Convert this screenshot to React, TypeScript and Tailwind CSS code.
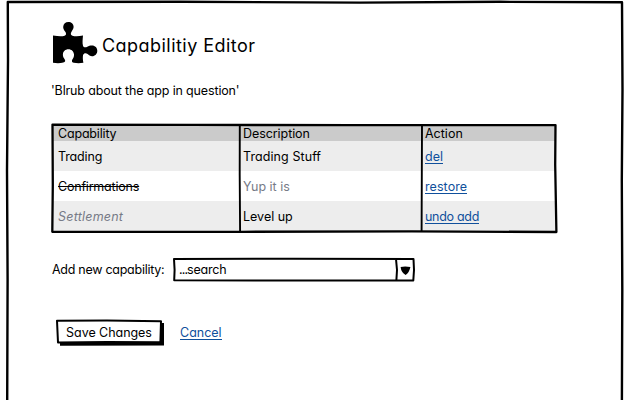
import type { ReactNode } from "react";

function Sketch({ d, w, h, sw = 2.3 }: { d: string; w: number; h: number; sw?: number }) {
  return (
    <svg className="pointer-events-none absolute left-0 top-0 overflow-visible" width={w} height={h} viewBox={`0 0 ${w} ${h}`} fill="none" stroke="#000" strokeWidth={sw} strokeLinejoin="round" aria-hidden="true">
      <path d={d} />
    </svg>
  );
}

function Puzzle() {
  return (
    <svg className="block shrink-0" width="46" height="43" viewBox="0 0 46 43" fill="#000" aria-hidden="true">
      <path d="M1 14.5C6 15.4 10 15.6 12.6 14.8C14.6 14 14.4 12 12.9 10.2C11.8 8.8 11.1 7.4 11.2 5.7C11.4 2.8 13.5 1 16.4 1C19.3 1 21.5 2.9 21.6 5.8C21.6 7.5 20.8 8.8 19.8 10.2C18.4 12.1 18.4 14 20.4 14.7C23.2 15.5 27 15.3 31 14.5C30.7 18 30.2 22 31 24.7C31.6 26.6 33.5 26.7 35.3 25.8C36.7 25 38 24.5 40 24.5C43.1 24.5 45.3 26.8 45.3 29.7C45.3 32.8 43 35.2 40.1 35.2C38.1 35.2 36.8 34.1 35.6 33C34 31.6 31.8 31.9 31.1 34C30.6 36 30.8 39 31.4 41.8C28 42.3 24.5 42.3 21.8 41.7C19.4 41.1 19.6 39.4 20.7 37.9C21.6 36.7 22.1 35.4 22 33.6C21.8 30.3 19.6 28.2 16.4 28.2C13.2 28.2 11.1 30.3 10.9 33.5C10.8 35.3 11.5 36.6 12.5 37.9C13.7 39.6 13.4 41 11.3 41.6C8.5 42.3 4.5 42.3 1 41.8Z" />
    </svg>
  );
}

function Link({ children, className = "" }: { children: ReactNode; className?: string }) {
  return (
    <a href="#" className={`inline-block h-[15px] border-b border-[#10509c] leading-[15px] text-[#10509c] ${className}`}>
      {children}
    </a>
  );
}

const cols = "grid grid-cols-[188px_182px_132px]";

export default function App() {
  return (
    <main className="relative h-[400px] w-[640px] overflow-hidden bg-white pl-[52px] font-['Inter','Liberation_Sans',sans-serif] text-[12.5px] leading-4 text-black [font-feature-settings:'cv11']">
      <Sketch w={640} h={400} sw={2.4} d="M7.2 400L7.6 280L7 170L8 60L7.8 2L180 1.8L360 2.6L500 1.8L622 2.3L622.5 90L621.8 180L622.3 290L621.9 400" />
      <header className="flex h-[65px] items-start pt-[21px]">
        <Puzzle />
        <h1 className="ml-[4px] mt-[13px] whitespace-nowrap text-[18px] font-normal leading-[24px] tracking-[0.46px]">Capabilitiy Editor</h1>
      </header>
      <p className="-ml-px mt-[18px] whitespace-nowrap tracking-[-0.15px]">'Blrub about the app in question'</p>

      <section className="relative mt-[26px] w-[504px]">
        <div className={`${cols} h-4 bg-[#cbcbcb] leading-[18px]`}>
          <span className="pl-[6px] tracking-[-0.18px]">Capability</span>
          <span className="pl-[3px] tracking-[-0.07px]">Description</span>
          <span className="pl-[3px]">Action</span>
        </div>
        <div className={`${cols} h-[30px] items-center bg-[#ededed] pt-[2px]`}>
          <span className="pl-[6px] tracking-[-0.15px]">Trading</span>
          <span className="pl-[3px] tracking-[0.08px]">Trading Stuff</span>
          <span className="pl-[3px]"><Link>del</Link></span>
        </div>
        <div className={`${cols} h-[30px] items-center bg-white pt-[2px]`}>
          <span className="pl-[6px] tracking-[-0.2px] line-through">Confirmations</span>
          <span className="pl-[3px] text-[#777b87]">Yup it is</span>
          <span className="pl-[3px]"><Link className="tracking-[0.08px]">restore</Link></span>
        </div>
        <div className={`${cols} h-[30px] items-center bg-[#ededed] pt-[2px]`}>
          <span className="pl-[6px] italic tracking-[0.22px] text-[#777b87]">Settlement</span>
          <span className="pl-[3px]">Level up</span>
          <span className="pl-[3px]"><Link className="tracking-[-0.3px]">undo add</Link></span>
        </div>
        <Sketch w={504} h={107} d="M.5 -.4L140 -.1L300 .1L503.5 .1L503.2 40L504.4 107L360 106.3L190 106.8L.3 106.8L.8 60Z" />
        <Sketch w={504} h={107} sw={1.9} d="M187.8 0L187.7 50L188.1 107M370 0L369.6 107" />
      </section>

      <div className="mt-[27px] flex h-[23px] items-center">
        <label className="w-[121px] shrink-0 whitespace-nowrap tracking-[-0.27px]">Add new capability:</label>
        <div className="relative h-[23px] w-[241px] pl-[6px] leading-[23px] tracking-[-0.2px]">
          <span className="tracking-[-0.9px]">...</span>search
          <Sketch w={241} h={23} sw={2} d="M1 1L120 .7L240.5 1L241 12L240.3 22.5L100 22.5L1.2 22.3L1.6 12ZM223 1L224 12L223.4 22" />
          <svg className="absolute left-[227px] top-[8px]" width="11" height="10" viewBox="0 0 11 10" aria-hidden="true">
            <path d="M.6 1C4 .2 7 .4 10.4 1Q9.6 6 5.6 9Q1.2 6.4 .6 1Z" />
          </svg>
        </div>
      </div>

      <div className="mt-[39px] flex h-[24px] items-start">
        <button className="relative ml-[5px] h-[23px] w-[104px] whitespace-nowrap text-center leading-[25px] tracking-[-0.05px]">
          <svg className="absolute left-0 top-0 overflow-visible" width="104" height="23" viewBox="0 0 104 23" aria-hidden="true">
            <path d="M3 3L107 3L107 25.4L3 25.7Z" />
            <path d="M0 .8L50 .5L104 1.3L103.4 22.2L50 21.9L1 22.5Z" fill="#fff" stroke="#000" strokeWidth="2" strokeLinejoin="round" />
          </svg>
          <span className="relative">Save Changes</span>
        </button>
        <Link className="ml-[19px] mt-[5px]">Cancel</Link>
      </div>
    </main>
  );
}
